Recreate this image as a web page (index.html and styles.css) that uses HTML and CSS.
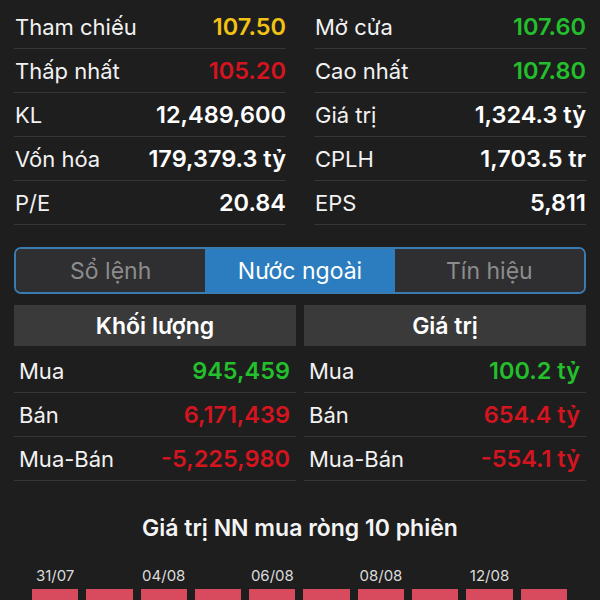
FILE: index.html
```html
<!DOCTYPE html>
<html lang="vi">
<head>
  <meta charset="UTF-8">
  <meta name="viewport" content="width=device-width, initial-scale=1.0">
  <title>Chi tiết cổ phiếu</title>
  <link rel="stylesheet" href="styles.css">
</head>
<body>
  <div id="page">
    <div class="stats">
      <div class="stat-col">
        <div class="row"><span>Tham chiếu</span><span class="val ref">107.50</span></div>
        <div class="row"><span>Thấp nhất</span><span class="val down">105.20</span></div>
        <div class="row"><span>KL</span><span class="val">12,489,600</span></div>
        <div class="row"><span>Vốn hóa</span><span class="val">179,379.3 tỷ</span></div>
        <div class="row"><span>P/E</span><span class="val">20.84</span></div>
      </div>
      <div class="stat-col">
        <div class="row"><span>Mở cửa</span><span class="val up">107.60</span></div>
        <div class="row"><span>Cao nhất</span><span class="val up">107.80</span></div>
        <div class="row"><span>Giá trị</span><span class="val">1,324.3 tỷ</span></div>
        <div class="row"><span>CPLH</span><span class="val">1,703.5 tr</span></div>
        <div class="row"><span>EPS</span><span class="val">5,811</span></div>
      </div>
    </div>

    <div class="tabs">
      <div class="tab">Sổ lệnh</div>
      <div class="tab active">Nước ngoài</div>
      <div class="tab">Tín hiệu</div>
    </div>

    <div class="foreign">
      <div class="ftable">
        <div class="fhead">Khối lượng</div>
        <div class="frows">
          <div class="row"><span>Mua</span><span class="val up">945,459</span></div>
          <div class="row"><span>Bán</span><span class="val down">6,171,439</span></div>
          <div class="row"><span>Mua-Bán</span><span class="val down">-5,225,980</span></div>
        </div>
      </div>
      <div class="ftable">
        <div class="fhead">Giá trị</div>
        <div class="frows">
          <div class="row"><span>Mua</span><span class="val up">100.2 tỷ</span></div>
          <div class="row"><span>Bán</span><span class="val down">654.4 tỷ</span></div>
          <div class="row"><span>Mua-Bán</span><span class="val down">-554.1 tỷ</span></div>
        </div>
      </div>
    </div>

    <h2 class="chart-title">Giá trị NN mua ròng 10 phiên</h2>
    <div class="chart">
      <div class="col"><span class="date">31/07</span><div class="bar"></div></div>
      <div class="col"><span class="date"></span><div class="bar"></div></div>
      <div class="col"><span class="date">04/08</span><div class="bar"></div></div>
      <div class="col"><span class="date"></span><div class="bar"></div></div>
      <div class="col"><span class="date">06/08</span><div class="bar"></div></div>
      <div class="col"><span class="date"></span><div class="bar"></div></div>
      <div class="col"><span class="date">08/08</span><div class="bar"></div></div>
      <div class="col"><span class="date"></span><div class="bar"></div></div>
      <div class="col"><span class="date">12/08</span><div class="bar"></div></div>
      <div class="col"><span class="date"></span><div class="bar"></div></div>
    </div>
  </div>
</body>
</html>
```

FILE: styles.css
```css
body {
  margin: 0;
  font-family: Inter, "Noto Sans", sans-serif;
  background: #1e1e1e;
  color: #f2f2f2;
  overflow: hidden;
}
#page {
  padding: 5px 14px 0 14px;
}
.stats {
  display: grid;
  grid-template-columns: 1fr 1fr;
  column-gap: 28px;
}
.row {
  display: flex;
  justify-content: space-between;
  align-items: center;
  height: 43px;
  border-bottom: 1px solid #363636;
  font-size: 22px;
  padding-left: 1px;
}
.val {
  font-size: 23.5px;
  font-weight: 600;
  color: #fff;
}
.val.ref {
  color: #f2c314;
}
.val.up {
  color: #23bf2c;
}
.val.down {
  color: #d4141e;
}
.tabs {
  display: flex;
  margin-top: 22px;
  height: 43px;
  border: 2px solid #3a7bb0;
  border-radius: 7px;
  overflow: hidden;
}
.tab {
  flex: 1;
  display: flex;
  align-items: center;
  justify-content: center;
  background: #2f2f31;
  color: #8c8c8c;
  font-size: 23px;
}
.tab.active {
  background: #2b7dc0;
  color: #fff;
}
.foreign {
  display: grid;
  grid-template-columns: 1fr 1fr;
  column-gap: 8px;
  margin-top: 11px;
}
.fhead {
  height: 41px;
  display: flex;
  align-items: center;
  justify-content: center;
  background: #3a3a3a;
  font-size: 23px;
  font-weight: 600;
  color: #fff;
}
.frows {
  padding-top: 3px;
}
.frows .row {
  padding: 0 6px 0 5px;
}
.chart-title {
  margin: 33px 0 0 0;
  text-align: center;
  font-size: 23px;
  font-weight: 600;
  line-height: 28px;
  color: #f4f4f4;
}
.chart {
  display: grid;
  grid-template-columns: repeat(10, 1fr);
  column-gap: 8px;
  padding: 0 19px 0 18px;
  margin-top: 24px;
}
.col {
  display: flex;
  flex-direction: column;
  align-items: center;
  gap: 3px;
}
.date {
  height: 20px;
  line-height: 20px;
  font-size: 15px;
  color: #dcdcdc;
}
.bar {
  width: 100%;
  height: 60px;
  background: #d84a5d;
}
```
